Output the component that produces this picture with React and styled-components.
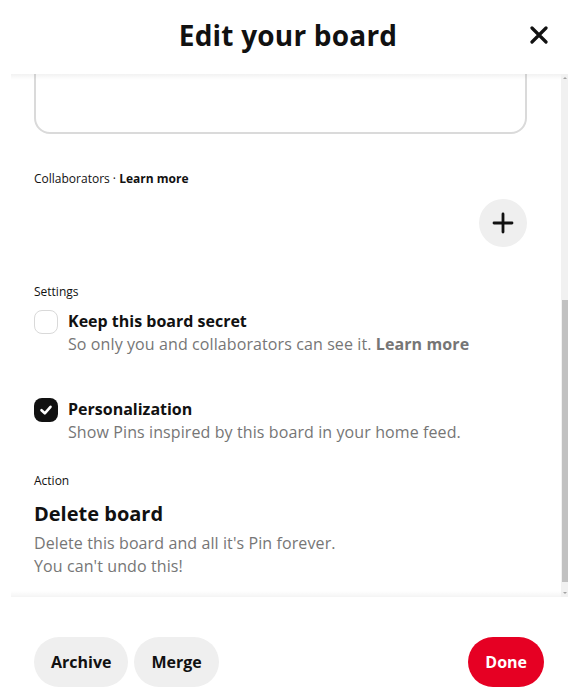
import React, { useLayoutEffect, useRef } from 'react'
import styled, { createGlobalStyle } from "styled-components";

const Global = createGlobalStyle`
  html, body {
    margin: 0;
    padding: 0;
    background: #fff;
  }
  body {
    font-family: "Open Sans", "Noto Sans", "Liberation Sans", sans-serif;
    color: #111;
  }
  * { box-sizing: border-box; }
`;

const Modal = styled.div`
  width: 576px;
  height: 694px;
  display: flex;
  flex-direction: column;
  background: #fff;
  overflow: hidden;
`;

const Header = styled.div`
  height: 74px;
  flex: none;
  display: grid;
  grid-template-columns: 1fr auto 1fr;
  align-items: center;
  padding: 0 25px 4px 25px;
`;

const Title = styled.h1`
  grid-column: 2;
  margin: 0;
  font-size: 28px;
  font-weight: 700;
  letter-spacing: 0.2px;
  color: #111;
`;

const CloseButton = styled.button`
  grid-column: 3;
  justify-self: end;
  width: 24px;
  height: 24px;
  padding: 0;
  border: none;
  background: transparent;
  display: flex;
  align-items: center;
  justify-content: center;
  cursor: pointer;
`;

const ScrollFrame = styled.div`
  position: relative;
  height: 523px;
  flex: none;
  margin: 0 8px 0 12px;

  &::before, &::after {
    content: "";
    position: absolute;
    left: -1px;
    right: 7px;
    height: 6px;
    pointer-events: none;
    z-index: 2;
  }
  &::before {
    top: 0;
    background: linear-gradient(rgba(0,0,0,0.05), rgba(0,0,0,0));
  }
  &::after {
    bottom: 0;
    background: linear-gradient(rgba(0,0,0,0), rgba(0,0,0,0.045));
  }
`;

const Scroller = styled.div`
  height: 100%;
  overflow-y: auto;
  scrollbar-width: none;
  padding: 0 41px 19px 22px;

  &::-webkit-scrollbar { display: none; }
`;

/* scrollbar drawn over the right edge of the scrolling pane */
const Track = styled.div`
  position: absolute;
  top: 0;
  right: 0;
  bottom: 0;
  width: 7px;
  background: #f1f1f1;
  z-index: 3;

  &::before, &::after {
    content: "";
    position: absolute;
    left: 2px;
    border-left: 2px solid transparent;
    border-right: 2px solid transparent;
  }
  &::before {
    top: 3px;
    border-bottom: 2px solid #a3a3a3;
  }
  &::after {
    bottom: 3px;
    border-top: 2px solid #a3a3a3;
  }
`;

const Thumb = styled.div`
  position: absolute;
  left: 1px;
  right: 0;
  top: 226px;
  height: 282px;
  background: #c1c1c1;
`;

const Label = styled.div`
  font-size: 12px;
  line-height: 16px;
  color: #111;
  margin-top: ${p => p.$top || 0}px;

  b { font-weight: 700; }
`;

const Field = styled.div`
  width: 100%;
  height: ${p => p.$height}px;
  border: 2px solid #dadada;
  border-radius: 16px;
  margin-top: 300px;
`;

const PlusRow = styled.div`
  display: flex;
  justify-content: flex-end;
  margin-top: 12px;
`;

const RoundButton = styled.button`
  width: 48px;
  height: 48px;
  border-radius: 50%;
  border: none;
  background: #efefef;
  display: flex;
  align-items: center;
  justify-content: center;
  padding: 0;
  cursor: pointer;
`;

const CheckRow = styled.div`
  display: flex;
  gap: 10px;
  margin-top: ${p => p.$top}px;
`;

const Box = styled.div`
  flex: none;
  width: 24px;
  height: 24px;
  border-radius: 8px;
  border: ${p => (p.$checked ? "none" : "1.5px solid #d9d9d9")};
  background: ${p => (p.$checked ? "#111" : "#fff")};
  display: flex;
  align-items: center;
  justify-content: center;
`;

const CheckText = styled.div`
  display: flex;
  flex-direction: column;
`;

const CheckTitle = styled.div`
  font-size: 16px;
  line-height: 22px;
  font-weight: 700;
`;

const Muted = styled.div`
  font-size: 16px;
  line-height: ${p => p.$lh || 24}px;
  color: #767676;
  letter-spacing: 0.1px;

  b { font-weight: 700; }
`;

const ActionTitle = styled.div`
  font-size: 20px;
  line-height: 28px;
  font-weight: 700;
  margin-top: 11px;
  margin-bottom: 4px;
`;

const Footer = styled.div`
  flex: 1;
  display: flex;
  align-items: flex-start;
  padding: 40px 32px 0 34px;
  gap: 6px;
`;

const Pill = styled.button`
  height: 50px;
  padding: 0 17px;
  border-radius: 25px;
  border: none;
  font-family: inherit;
  font-size: 16px;
  font-weight: 700;
  cursor: pointer;
  background: ${p => (p.$primary ? "#e60023" : "#efefef")};
  color: ${p => (p.$primary ? "#fff" : "#111")};
  margin-left: ${p => (p.$push ? "auto" : "0")};
`;

export default function App() {
  const ref = useRef(null);

  useLayoutEffect(() => {
    if (ref.current) ref.current.scrollTop = ref.current.scrollHeight;
  }, []);

  return (
    <Modal>
      <Global />
      <Header>
        <Title>Edit your board</Title>
        <CloseButton aria-label="Close">
          <svg width="18" height="18" viewBox="0 0 18 18">
            <path d="M2 2 L16 16 M16 2 L2 16" stroke="#111" strokeWidth="3.2" strokeLinecap="round" />
          </svg>
        </CloseButton>
      </Header>

      <ScrollFrame>
        <Scroller ref={ref}>
          <Field $height={130} />

          <Label $top={37}>Collaborators · <b>Learn more</b></Label>
          <PlusRow>
            <RoundButton aria-label="Add collaborator">
              <svg width="22" height="22" viewBox="0 0 22 22">
                <path d="M11 2 V20 M2 11 H20" stroke="#111" strokeWidth="2.8" strokeLinecap="round" />
              </svg>
            </RoundButton>
          </PlusRow>

          <Label $top={37}>Settings</Label>
          <CheckRow $top={10}>
            <Box />
            <CheckText>
              <CheckTitle>Keep this board secret</CheckTitle>
              <Muted>So only you and collaborators can see it. <b>Learn more</b></Muted>
            </CheckText>
          </CheckRow>
          <CheckRow $top={42}>
            <Box $checked>
              <svg width="14" height="14" viewBox="0 0 14 14">
                <path d="M2.5 7.2 L5.8 10.3 L11.5 3.8" stroke="#fff" strokeWidth="2.6" fill="none" strokeLinecap="round" strokeLinejoin="round" />
              </svg>
            </Box>
            <CheckText>
              <CheckTitle>Personalization</CheckTitle>
              <Muted>Show Pins inspired by this board in your home feed.</Muted>
            </CheckText>
          </CheckRow>

          <Label $top={29}>Action</Label>
          <ActionTitle>Delete board</ActionTitle>
          <Muted $lh={23}>Delete this board and all it's Pin forever.</Muted>
          <Muted $lh={23}>You can't undo this!</Muted>
        </Scroller>
        <Track>
          <Thumb />
        </Track>
      </ScrollFrame>

      <Footer>
        <Pill>Archive</Pill>
        <Pill>Merge</Pill>
        <Pill $primary $push>Done</Pill>
      </Footer>
    </Modal>
  );
}
